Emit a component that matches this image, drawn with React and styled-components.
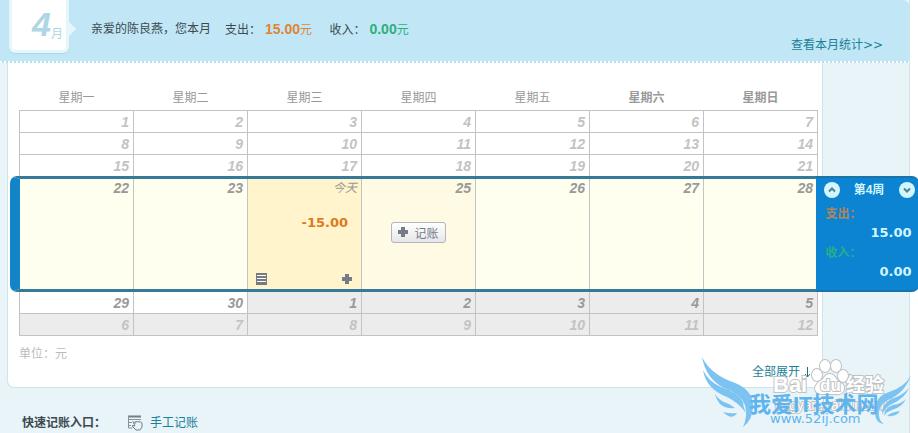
import React from "react";
import styled, { createGlobalStyle } from "styled-components";

const GlobalStyle = createGlobalStyle`
  * {
    box-sizing: border-box;
  }
  body {
    margin: 0;
    background-color: #ffffff;
    color: #3c4a50;
    font-family: "Liberation Sans", "Noto Sans CJK SC", sans-serif;
    font-size: 12px;
    line-height: 16px;
    overflow: hidden;
  }
  a {
    color: #1a8198;
    text-decoration: none;
  }
`;

const Page = styled.div`
  position: relative;
  display: flex;
  flex-direction: column;
  min-height: 100vh;
  margin-right: 8px;
  border-right: 1px solid #cfe3ea;
  background-color: #e8f4f8;
`;

const Header = styled.header`
  position: relative;
  display: flex;
  align-items: flex-start;
  height: 63px;
  padding-left: 9px;
  border-top-right-radius: 6px;
  background-color: #c1e7f6;

  &::after {
    content: "";
    position: absolute;
    left: 0;
    right: 0;
    bottom: 0;
    height: 2px;
    background-image: repeating-linear-gradient(
      90deg,
      #ffffff 0 2px,
      #b9dfec 2px 4px
    );
  }
`;

const Month = styled.div`
  position: relative;
  display: flex;
  align-items: flex-end;
  justify-content: flex-end;
  width: 60px;
  height: 53px;
  padding: 0 3px 8px 0;
  border: 3px solid #e6f6fc;
  border-top: 0;
  border-radius: 0 0 6px 6px;
  background-color: #ffffff;
  box-shadow: 0 1px 1px #a9d6e6;
  color: #aed6e4;

  &::after {
    content: "";
    position: absolute;
    top: 21px;
    left: 56px;
    border: 8px solid transparent;
    border-left-color: #e6f6fc;
    border-right: 0;
  }
`;

const MonthNumber = styled.strong`
  font-size: 34px;
  font-style: italic;
  line-height: 36px;
`;

const Summary = styled.p`
  flex: 1;
  display: flex;
  margin: 21px 0 0 22px;
`;

const SummaryItem = styled.span`
  margin-left: 14px;
`;

const Amount = styled.span`
  margin-left: 4px;
  color: ${props => (props.$income ? "#2eae7b" : "#dd8535")};

  strong {
    font-size: 14px;
  }
`;

const StatsLink = styled.a`
  margin: 37px 26px 0 0;
`;

const LinkArrow = styled.span`
  font-family: "DejaVu Sans", sans-serif;
`;

const Body = styled.div`
  display: flex;
  padding: 0 86px 0 7px;
`;

const Card = styled.main`
  flex: 1;
  padding: 26px 4px 7px 11px;
  border: 1px solid #cfe3ea;
  border-top: 0;
  border-radius: 0 0 7px 7px;
  background-color: #ffffff;
`;

const Calendar = styled.table`
  width: 100%;
  border-collapse: collapse;
  table-layout: fixed;
`;

const DayName = styled.th`
  height: 21px;
  padding: 0;
  color: #999999;
  font-weight: ${props => (props.$weekend ? 700 : 400)};
  line-height: 18px;
  vertical-align: top;
`;

const Week = styled.tr`
  position: relative;
  color: ${props => (props.$near ? "#999999" : "#c3c3c3")};
`;

const Day = styled.td`
  height: ${props => (props.$open ? 115 : 22)}px;
  padding: 3px 4px 2px;
  border: 1px solid #c3c3c3;
  background-color: ${props => props.$fill};
  font-size: 14px;
  font-style: italic;
  font-weight: 700;
  line-height: 16px;
  text-align: right;
  vertical-align: top;
`;

const WeekFrame = styled.div`
  position: absolute;
  top: 0;
  bottom: -1px;
  left: -10px;
  right: 0;
  border: solid #357a98;
  border-width: 3px 0;
  border-left: 10px solid #1284c7;
  border-radius: 7px 0 0 7px;
  pointer-events: none;
`;

const WeekPanel = styled.section`
  position: absolute;
  top: 0;
  bottom: -1px;
  left: calc(100% - 2px);
  width: 103px;
  padding: 4px 7px 0 10px;
  border-top: 2px solid #1a74a8;
  border-bottom: 2px solid #1a74a8;
  border-radius: 0 7px 7px 0;
  background-color: #0c84d1;
  color: #d2f6ff;
  font-style: normal;
  text-align: left;
`;

const PanelHead = styled.div`
  display: flex;
  align-items: center;
  justify-content: space-between;
  height: 16px;
  margin: 0 -3px 8px -2px;
  font-size: 12px;
`;

const RoundButton = styled.button`
  display: flex;
  width: 16px;
  height: 16px;
  padding: 0;
  border: 0;
  border-radius: 50%;
  background-color: #d2f6ff;
`;

const PanelLabel = styled.div`
  height: 17px;
  color: ${props => (props.$income ? "#25b08c" : "#b08560")};
  font-size: 12px;
  line-height: 17px;
`;

const PanelValue = styled.div`
  height: 22px;
  font-family: "DejaVu Sans", sans-serif;
  font-size: 13px;
  line-height: 20px;
  text-align: right;
`;

const Today = styled.div`
  display: flex;
  flex-direction: column;
  height: 105px;
`;

const TodayLabel = styled.span`
  font-size: 12px;
  font-weight: 400;
`;

const TodayAmount = styled.span`
  flex: 1;
  padding: 19px 9px 0 0;
  color: #dd7a20;
  font-family: "DejaVu Sans", sans-serif;
  font-size: 13px;
  font-style: normal;
`;

const TodayActions = styled.div`
  display: flex;
  justify-content: space-between;
  padding: 0 4px;
`;

const IconButton = styled.button`
  display: flex;
  padding: 0;
  border: 0;
  background: none;
`;

const AddButton = styled.button`
  display: flex;
  align-items: center;
  gap: 5px;
  height: 21px;
  margin: 26px auto 0;
  padding: 0 6px 0 5px;
  border: 1px solid #b5b5b8;
  border-radius: 3px;
  background-image: linear-gradient(#ffffff, #e6e6ea);
  color: #777c88;
  font-family: inherit;
  font-size: 12px;
`;

const Unit = styled.p`
  margin: 10px 0 0;
  color: #bbbbbb;
`;

const ExpandRow = styled.div`
  display: flex;
  justify-content: flex-end;
  margin-top: 2px;
  padding-right: 6px;
`;

const ExpandLink = styled.a`
  display: flex;
  gap: 3px;
`;

const Shortcuts = styled.footer`
  display: flex;
  align-items: center;
  padding: 27px 0 0 22px;
`;

const ShortcutLink = styled.a`
  display: flex;
  align-items: center;
  gap: 7px;
  margin-left: 21px;
`;

const Watermark = styled.svg`
  position: absolute;
  right: -9px;
  top: 350px;
  width: 222px;
  height: 83px;
  pointer-events: none;
`;

const PlusIcon = () => (
  <svg width="12" height="12" viewBox="0 0 12 12">
    <path d="M4 1h4v3h3v4H8v3H4V8H1V4h3z" fill="#777b85" />
  </svg>
);

const ListIcon = () => (
  <svg width="11" height="12" viewBox="0 0 11 12">
    <path d="M0 0h11v12H0z" fill="#777b80" />
    <path d="M1 2h9v1H1zM1 5h9v1H1zM1 8h9v1H1z" fill="#ffffff" />
  </svg>
);

const ArrowDownIcon = () => (
  <svg width="9" height="16" viewBox="0 0 9 16" fill="none">
    <path d="M4.5 3v10M2 10l2.5 3L7 10" stroke="#1a6f84" />
  </svg>
);

const Chevron = ({ down }) => (
  <svg width="16" height="16" viewBox="0 0 16 16" fill="none">
    <path
      d={down ? "M5 6.5l3 3 3-3" : "M5 9.5l3-3 3 3"}
      stroke="#557f90"
      strokeWidth="2"
    />
  </svg>
);

const HandIcon = () => (
  <svg width="16" height="16" viewBox="0 0 16 16" fill="none">
    <path d="M1 1.5h13" stroke="#777d88" strokeWidth="2" />
    <path d="M1 4.5h13M1 7.5h4M1 10.5h3M1.5 1v12h4" stroke="#8a909a" />
    <path
      d="M6 6.5l2 2V7q1-1 2 0 1-1 2 0 1-1 3 1v4l-2 3H9l-4-4q0-1 3 0z"
      fill="#e8f4f8"
      stroke="#777d88"
    />
  </svg>
);

const dayNames = [
  "星期一",
  "星期二",
  "星期三",
  "星期四",
  "星期五",
  "星期六",
  "星期日"
];

const weeks = [
  [1, 2, 3, 4, 5, 6, 7],
  [8, 9, 10, 11, 12, 13, 14],
  [15, 16, 17, 18, 19, 20, 21],
  [22, 23, 24, 25, 26, 27, 28],
  [29, 30, 1, 2, 3, 4, 5],
  [6, 7, 8, 9, 10, 11, 12]
];

const OPEN_WEEK = 3;

const dayFill = (week, day) => {
  if (week === OPEN_WEEK) {
    return day === 24 ? "#fff4cc" : day === 25 ? "#fefae3" : "#fffff0";
  }
  return week === 5 || (week === 4 && day < 29) ? "#ececec" : "#ffffff";
};

const TodayCell = () => (
  <Today>
    <TodayLabel>今天</TodayLabel>
    <TodayAmount>-15.00</TodayAmount>
    <TodayActions>
      <IconButton aria-label="明细">
        <ListIcon />
      </IconButton>
      <IconButton aria-label="记账">
        <PlusIcon />
      </IconButton>
    </TodayActions>
  </Today>
);

const WeekSummary = () => (
  <WeekPanel>
    <PanelHead>
      <RoundButton aria-label="上一周">
        <Chevron />
      </RoundButton>
      <span>第4周</span>
      <RoundButton aria-label="下一周">
        <Chevron down />
      </RoundButton>
    </PanelHead>
    <PanelLabel>支出：</PanelLabel>
    <PanelValue>15.00</PanelValue>
    <PanelLabel $income>收入：</PanelLabel>
    <PanelValue>0.00</PanelValue>
  </WeekPanel>
);

const SiteMark = () => (
  <Watermark viewBox="0 0 222 83">
    <g
      fill="#ffffff"
      stroke="#bfc3c5"
      strokeWidth="2"
      paintOrder="stroke"
      fontFamily="Liberation Sans, Noto Sans CJK SC, sans-serif"
      fontWeight="700"
    >
      <text x="77" y="42" fontSize="22">Bai</text>
      <ellipse cx="121" cy="25" rx="5" ry="6" />
      <ellipse cx="129" cy="16" rx="5" ry="6" />
      <ellipse cx="140" cy="16" rx="5" ry="6" />
      <ellipse cx="147" cy="26" rx="5" ry="6" />
      <path d="M134 24q4 0 7 6 8 4 7 10-2 5-8 4h-14q-6 0-7-5 0-5 8-10 3-5 7-5z" />
      <text x="124" y="41" fontSize="17">du</text>
      <text x="150" y="42" fontSize="19">经验</text>
      <text x="79" y="60" fontSize="14" fontWeight="400">
        jingyan.baidu.com
      </text>
    </g>
    <g fill="#7cc3f2">
      <path d="M6 7Q14 23 34 31 56 38 57 55 57 70 47 77 52 66 49 55 45 44 28 38 10 29 6 7z" />
      <path d="M7 20Q12 31 25 37 43 43 47 52 47 57 50 63 43 53 31 47 10 39 7 20z" />
      <path d="M19 44Q23 51 33 54L39 58Q23 60 19 44z" />
      <path d="M27 62Q34 64 41 63 36 71 27 62z" />
      <path d="M215 25Q209 43 192 50 181 56 183 66 184 72 188 74 178 73 179 59 180 46 193 42 209 37 215 25z" />
      <path d="M213 38Q209 48 196 54 189 57 186 65 185 55 195 49 206 46 213 38z" />
      <path d="M210 49Q206 57 196 60 190 62 188 66 188 58 197 55 205 54 210 49z" />
      <path d="M204 61Q201 67 191 66 195 62 204 61z" />
    </g>
    <g fill="#5eb4ee" fontFamily="Liberation Sans, Noto Sans CJK SC, sans-serif">
      <text x="53" y="62" fontSize="22" fontWeight="700">
        我爱IT技术网
      </text>
      <text x="74" y="73" fontFamily="DejaVu Sans, sans-serif" fontSize="13">
        www.52ij.com
      </text>
    </g>
  </Watermark>
);

const App = () => (
  <>
    <GlobalStyle />
    <Page>
      <Header>
        <Month>
          <MonthNumber>4</MonthNumber>月
        </Month>
        <Summary>
          亲爱的陈良燕，您本月
          <SummaryItem>
            支出：
            <Amount>
              <strong>15.00</strong>元
            </Amount>
          </SummaryItem>
          <SummaryItem>
            &nbsp;收入：
            <Amount $income>
              <strong>0.00</strong>元
            </Amount>
          </SummaryItem>
        </Summary>
        <StatsLink href="#stats">
          查看本月统计<LinkArrow>&gt;&gt;</LinkArrow>
        </StatsLink>
      </Header>
      <Body>
        <Card>
          <Calendar>
            <thead>
              <tr>
                {dayNames.map((name, index) => (
                  <DayName key={name} $weekend={index > 4}>
                    {name}
                  </DayName>
                ))}
              </tr>
            </thead>
            <tbody>
              {weeks.map((days, week) => (
                <Week key={week} $near={week === 3 || week === 4}>
                  {days.map((day, index) => (
                    <Day
                      key={day}
                      $open={week === OPEN_WEEK}
                      $fill={dayFill(week, day)}
                    >
                      {week === OPEN_WEEK && day === 24 ? <TodayCell /> : day}
                      {week === OPEN_WEEK && day === 25 && (
                        <AddButton>
                          <PlusIcon />
                          记账
                        </AddButton>
                      )}
                      {week === OPEN_WEEK && index === 0 && <WeekFrame />}
                      {week === OPEN_WEEK && index === 6 && <WeekSummary />}
                    </Day>
                  ))}
                </Week>
              ))}
            </tbody>
          </Calendar>
          <Unit>单位：元</Unit>
          <ExpandRow>
            <ExpandLink href="#all">
              全部展开
              <ArrowDownIcon />
            </ExpandLink>
          </ExpandRow>
        </Card>
      </Body>
      <Shortcuts>
        <strong>快速记账入口：</strong>
        <ShortcutLink href="#manual">
          <HandIcon />
          手工记账
        </ShortcutLink>
      </Shortcuts>
      <SiteMark />
    </Page>
  </>
);

export default App;
